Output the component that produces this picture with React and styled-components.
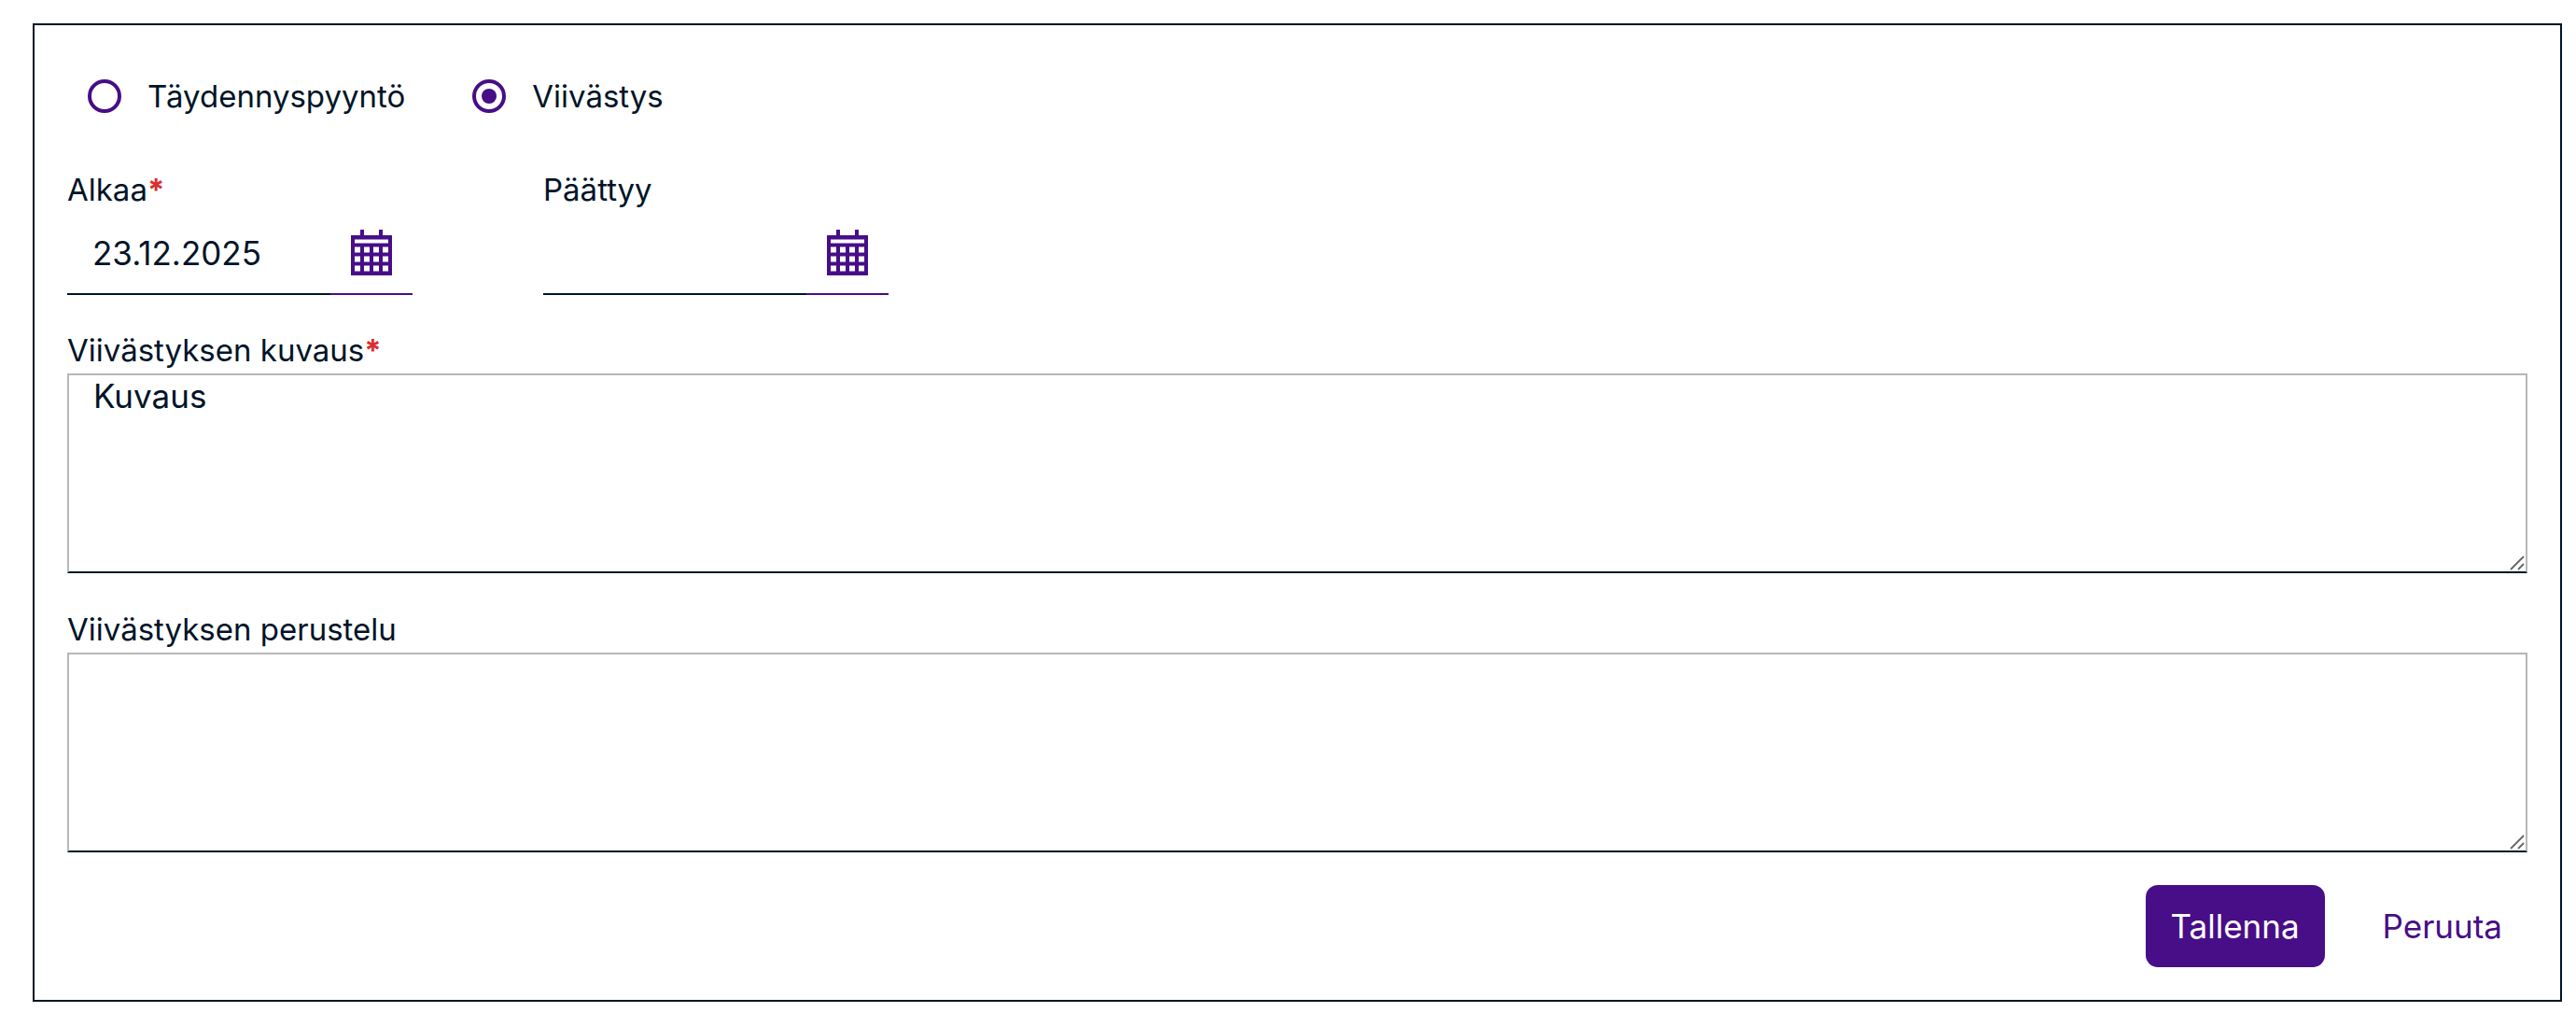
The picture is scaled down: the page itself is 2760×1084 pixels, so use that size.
import React, { useState } from "react";
import styled, { createGlobalStyle } from "styled-components";

const ink = "#001428";
const purple = "#470e87";
const gray = "#b7b7b7";

const GlobalStyle = createGlobalStyle`
  *, *::before, *::after { box-sizing: border-box; }
  body {
    margin: 0;
    background: #fff;
    color: ${ink};
    font-family: Inter, "Liberation Sans", sans-serif;
    font-size: 33px;
  }
  button, input, textarea { font: inherit; color: inherit; }
`;

const Form = styled.form`
  display: flex;
  flex-direction: column;
  gap: 35px;
  margin: 25px 15px 11px 35px;
  padding: 35px;
  border: 2px solid ${ink};
`;

const RadioRow = styled.div`
  display: flex;
  flex-wrap: wrap;
  align-items: center;
  gap: 72px;
  min-height: 82px;
  padding-left: 22px;
`;

const RadioLabel = styled.label`
  display: flex;
  align-items: center;
  gap: 28px;
  line-height: 44px;
  cursor: pointer;
`;

const Radio = styled.input`
  appearance: none;
  display: grid;
  place-items: center;
  width: 36px;
  height: 36px;
  margin: 0;
  border: 4px solid ${purple};
  border-radius: 50%;

  &:checked::before {
    content: "";
    width: 16px;
    height: 16px;
    border-radius: 50%;
    background: ${purple};
  }
`;

const DateRow = styled.div`
  display: flex;
  flex-wrap: wrap;
  gap: 35px 140px;
`;

const Field = styled.div`
  display: flex;
  flex-direction: column;
`;

const Label = styled.label`
  line-height: 49px;
`;

const Required = styled.span`
  color: #dd2c2f;
  font-weight: 700;
`;

const DateBox = styled.div`
  display: flex;
  width: 370px;
  height: 88px;
`;

const DateInput = styled.input`
  flex: 1;
  min-width: 0;
  padding: 0 27px;
  border: 0;
  border-bottom: 2px solid ${ink};
  background: transparent;
  font-size: 35px;
`;

const CalendarButton = styled.button`
  display: grid;
  place-items: center;
  width: 88px;
  padding: 0;
  border: 0;
  border-bottom: 2px solid ${purple};
  background: transparent;
  color: ${purple};
  cursor: pointer;
`;

const TextFields = styled.div`
  display: flex;
  flex-direction: column;
  gap: 36px;
`;

const TextBox = styled.div`
  position: relative;
  display: flex;
`;

const TextArea = styled.textarea`
  flex: 1;
  height: 214px;
  padding: 0 26px;
  border: 2px solid ${gray};
  border-bottom-color: ${ink};
  background: transparent;
  font-size: 35px;
  line-height: 44px;
  resize: none;
`;

const Grip = styled.svg`
  position: absolute;
  right: 3px;
  bottom: 3px;
  pointer-events: none;
`;

const Actions = styled.div`
  display: flex;
  justify-content: flex-end;
  gap: 35px;
`;

const Button = styled.button`
  height: 88px;
  padding: 0 27px;
  border: 0;
  border-radius: 13px;
  background: ${(p) => (p.$primary ? purple : "transparent")};
  color: ${(p) => (p.$primary ? "#fff" : purple)};
  font-size: 35px;
  cursor: pointer;
`;

function CalendarIcon() {
  return (
    <svg width="46" height="50" viewBox="0 0 46 50" fill="currentColor" aria-hidden="true">
      <path
        fillRule="evenodd"
        d="M11 0h4v6h16V0h4v6h10v43H1V6h10ZM5 10.500v4h36v-4ZM5 18.500v6h6v-6ZM15 18.500v6h6v-6ZM25 18.500v6h6v-6ZM35 18.500v6h6v-6ZM5 28.500v6h6v-6ZM15 28.500v6h6v-6ZM25 28.500v6h6v-6ZM35 28.500v6h6v-6ZM5 38.500v6h6v-6ZM15 38.500v6h6v-6ZM25 38.500v6h6v-6ZM35 38.500v6h6v-6Z"
      />
    </svg>
  );
}

function DateField({ id, label, required, defaultValue }) {
  return (
    <Field>
      <Label htmlFor={id}>
        {label}
        {required && <Required>*</Required>}
      </Label>
      <DateBox>
        <DateInput id={id} type="text" defaultValue={defaultValue} required={required} />
        <CalendarButton type="button">
          <CalendarIcon />
        </CalendarButton>
      </DateBox>
    </Field>
  );
}

function TextField({ id, label, required, defaultValue }) {
  return (
    <Field>
      <Label htmlFor={id}>
        {label}
        {required && <Required>*</Required>}
      </Label>
      <TextBox>
        <TextArea id={id} defaultValue={defaultValue} required={required} />
        <Grip width="16" height="16" viewBox="0 0 16 16" stroke="#666" strokeWidth="1.8" aria-hidden="true">
          <path d="M1 15 15 1M9 15l6-6" />
        </Grip>
      </TextBox>
    </Field>
  );
}

const kinds = [
  { value: "taydennyspyynto", label: "Täydennyspyyntö" },
  { value: "viivastys", label: "Viivästys" },
];

export default function App() {
  const [kind, setKind] = useState("viivastys");
  return (
    <>
      <GlobalStyle />
      <Form onSubmit={(e) => e.preventDefault()}>
        <RadioRow role="radiogroup">
          {kinds.map((k) => (
            <RadioLabel key={k.value}>
              <Radio
                type="radio"
                name="kind"
                value={k.value}
                checked={kind === k.value}
                onChange={() => setKind(k.value)}
              />
              {k.label}
            </RadioLabel>
          ))}
        </RadioRow>
        <DateRow>
          <DateField id="alkaa" label="Alkaa" required defaultValue="23.12.2025" />
          <DateField id="paattyy" label="Päättyy" defaultValue="" />
        </DateRow>
        <TextFields>
          <TextField id="kuvaus" label="Viivästyksen kuvaus" required defaultValue="Kuvaus" />
          <TextField id="perustelu" label="Viivästyksen perustelu" defaultValue="" />
        </TextFields>
        <Actions>
          <Button type="submit" $primary>Tallenna</Button>
          <Button type="button">Peruuta</Button>
        </Actions>
      </Form>
    </>
  );
}
